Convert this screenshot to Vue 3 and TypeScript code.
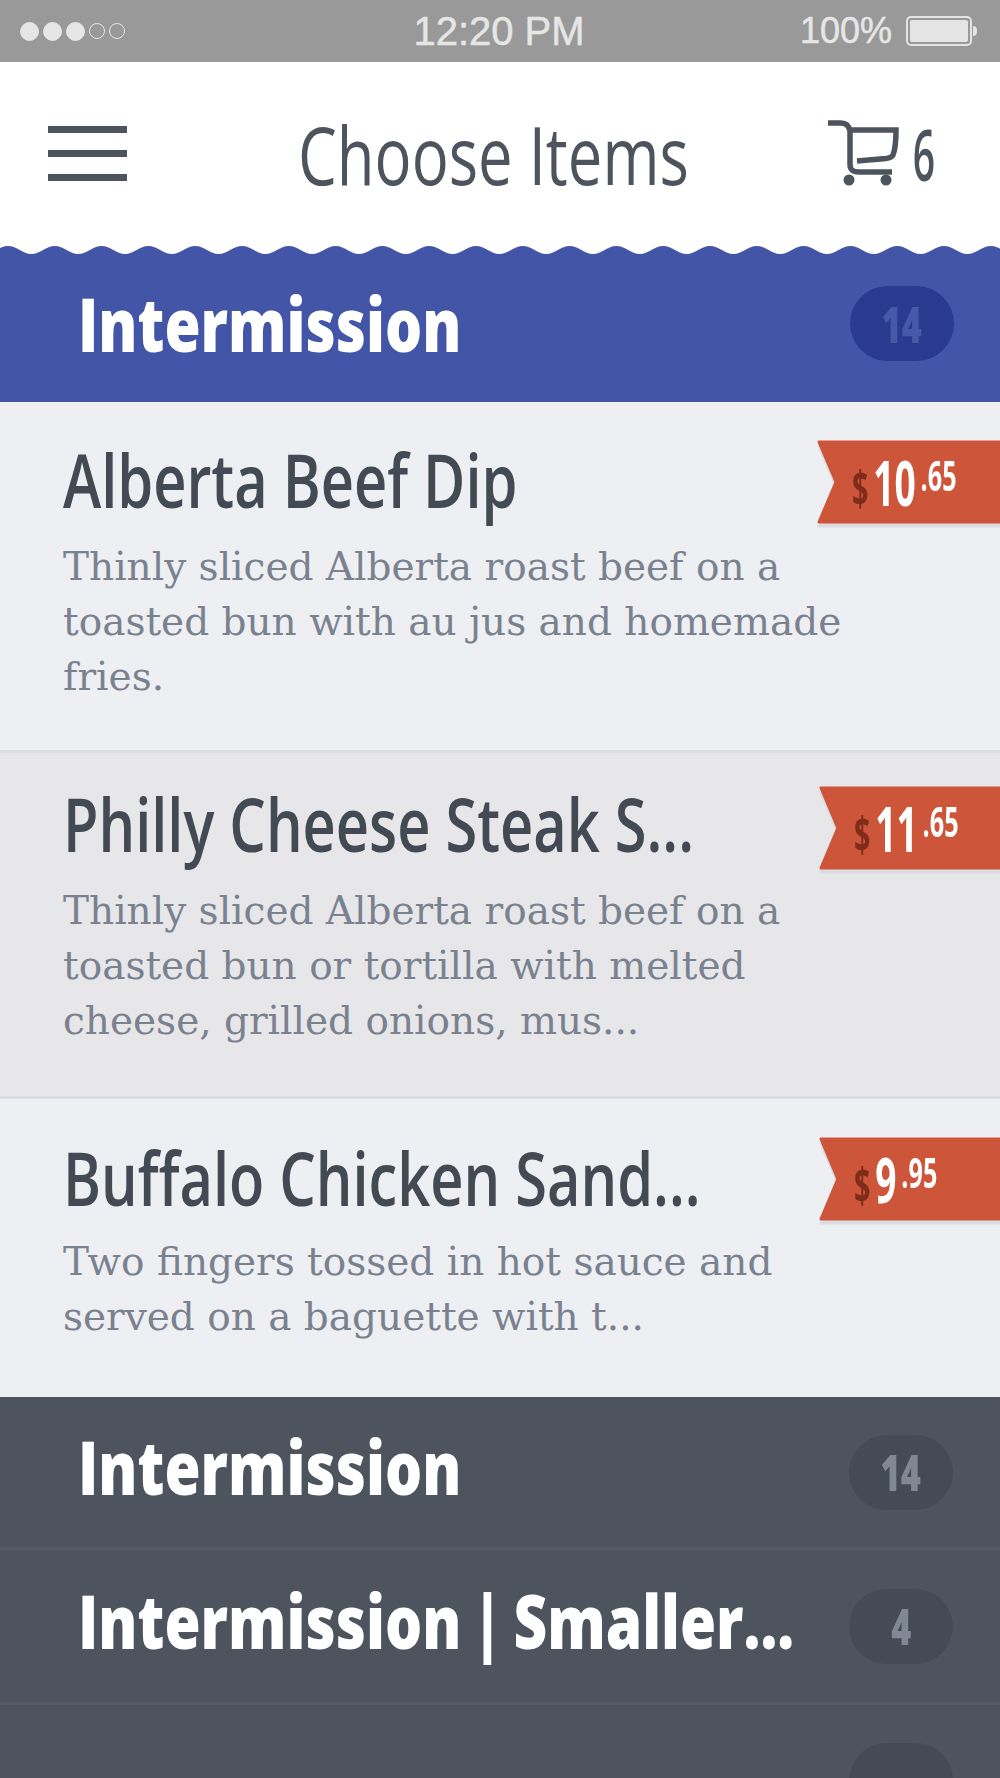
<script setup lang="ts">
interface MenuItem {
  name: string;
  lines: string[];
  dollars: string;
  cents: string;
  mod: string;
}

interface Row {
  name: string;
  count: string;
}

const items: MenuItem[] = [
  {
    name: 'Alberta Beef Dip',
    lines: ['Thinly sliced Alberta roast beef on a', 'toasted bun with au jus and homemade', 'fries.'],
    dollars: '10',
    cents: '.65',
    mod: 'item--first',
  },
  {
    name: 'Philly Cheese Steak S...',
    lines: ['Thinly sliced Alberta roast beef on a', 'toasted bun or tortilla with melted', 'cheese, grilled onions, mus...'],
    dollars: '11',
    cents: '.65',
    mod: 'item--shaded',
  },
  {
    name: 'Buffalo Chicken Sand...',
    lines: ['Two fingers tossed in hot sauce and', 'served on a baguette with t...'],
    dollars: '9',
    cents: '.95',
    mod: 'item--last',
  },
];

const rows: Row[] = [
  { name: 'Intermission', count: '14' },
  { name: 'Intermission | Smaller...', count: '4' },
  { name: '', count: '' },
];
</script>

<template>
  <div class="screen">
    <div class="status">
      <div class="status__dots">
        <i v-for="n in 3" :key="n" class="dot dot--full"></i>
        <i v-for="n in 2" :key="n" class="dot"></i>
      </div>
      <div class="status__time">12:20 PM</div>
      <div class="status__right">
        <span>100%</span>
        <svg width="72" height="32" viewBox="0 0 72 32">
          <rect x="1" y="2" width="64" height="28" rx="4" fill="none" stroke="#e4e4e4" stroke-width="2" />
          <rect x="4" y="5" width="58" height="22" rx="2" fill="#e4e4e4" />
          <path d="M67 11c3 0 4 2 4 5s-1 5-4 5z" fill="#e4e4e4" />
        </svg>
      </div>
    </div>

    <header class="top">
      <div class="burger"><i></i><i></i><i></i></div>
      <div class="top__title"><span>Choose Items</span></div>
      <div class="cart">
        <svg width="72" height="68" viewBox="0 0 72 68">
          <path d="M0 3h13c5 0 8 3 9 8v33c0 6 3 8 9 8h33M22 10H68c0 12-1 20-3 25-1 2-3 3-7 3.5L29 41" fill="none" stroke="#4d545e" stroke-width="5.5" />
          <circle cx="21" cy="60" r="5.5" fill="#4d545e" />
          <circle cx="58" cy="60" r="5.5" fill="#4d545e" />
        </svg>
        <span class="cart__count">6</span>
      </div>
    </header>

    <section class="section">
      <svg class="section__wave" width="1000" height="10" viewBox="0 0 1000 10">
        <defs>
          <pattern id="wave" width="46.8" height="10" patternUnits="userSpaceOnUse" x="8">
            <path d="M0 0H46.8V1C38 1 32 9 23.4 9S9 1 0 1z" fill="#fff" />
          </pattern>
        </defs>
        <rect width="1000" height="10" fill="url(#wave)" />
      </svg>
      <div class="section__head">
        <span class="head-name">Intermission</span>
        <span class="count count--blue"><span>14</span></span>
      </div>
    </section>

    <article v-for="item in items" :key="item.name" :class="['item', item.mod]">
      <div class="tag">
        <svg class="tag__bg" width="183" height="84" viewBox="0 0 183 84" preserveAspectRatio="none">
          <path d="M2 2H185V82H2L19 42z" fill="#cc553a" stroke="#cc553a" stroke-width="3" stroke-linejoin="round" />
        </svg>
        <span class="tag__text">
          <span class="tag__sign">$</span><span class="tag__big">{{ item.dollars }}</span><sup class="tag__small">{{ item.cents }}</sup>
        </span>
      </div>
      <h2 class="item__name"><span>{{ item.name }}</span></h2>
      <p class="item__desc">
        <span v-for="line in item.lines" :key="line">{{ line }}</span>
      </p>
    </article>

    <div v-for="row in rows" :key="row.count" class="row">
      <span class="head-name">{{ row.name }}</span>
      <span class="count"><span>{{ row.count }}</span></span>
    </div>
  </div>
</template>

<style>
html,
body {
  margin: 0;
  background: #4d545e;
}
</style>

<style scoped>
.screen {
  width: 1000px;
  height: 1778px;
  overflow: hidden;
  font-family: 'Open Sans', sans-serif;
}

.status {
  display: grid;
  grid-template-columns: 1fr auto 1fr;
  align-items: center;
  height: 62px;
  padding: 0 22px 0 20px;
  box-sizing: border-box;
  background: #999;
  color: #e6e6e6;
  font-family: 'Liberation Sans', sans-serif;
  font-size: 36px;
  -webkit-text-stroke: 0.5px #e6e6e6;
}

.status__dots {
  display: flex;
  align-items: center;
  gap: 4px;
}

.dot {
  width: 16px;
  height: 16px;
  border: 1.5px solid #e6e6e6;
  border-radius: 50%;
  box-sizing: border-box;
}

.dot--full {
  width: 19px;
  height: 19px;
  background: #e6e6e6;
}

.status__time {
  font-size: 40px;
}

.status__right {
  display: flex;
  align-items: center;
  justify-content: flex-end;
  gap: 14px;
}

.top {
  display: flex;
  align-items: center;
  height: 183px;
  padding: 0 65px 0 48px;
  box-sizing: border-box;
  background: #fff;
  color: #4d545e;
}

.burger {
  display: flex;
  flex-direction: column;
  gap: 17px;
  width: 79px;
}

.burger i {
  height: 7px;
  background: #4d545e;
}

.top__title {
  width: 390px;
  margin: 0 auto 0 171px;
  font-size: 80px;
  line-height: 100px;
  white-space: nowrap;
}

.top__title span {
  display: inline-block;
  transform: scaleX(0.77);
  transform-origin: left center;
}

.cart {
  display: flex;
  align-items: center;
  gap: 13px;
}

.cart svg {
  display: block;
}

.cart__count {
  display: flex;
  justify-content: center;
  width: 22px;
  font-size: 71px;
  line-height: 70px;
  font-weight: 600;
  transform: scaleX(0.55);
}

.section {
  position: relative;
  background: #4355a6;
}

.section__wave {
  position: absolute;
  top: 0;
  left: 0;
  display: block;
}

.section__head {
  display: flex;
  align-items: center;
  height: 157px;
  padding: 0 46px 0 78px;
  box-sizing: border-box;
}

.head-name {
  flex: 1;
  width: 0;
  color: #fff;
  font-size: 74px;
  font-weight: 800;
  line-height: 90px;
  word-spacing: -5px;
  white-space: nowrap;
  transform: scaleX(0.79);
  transform-origin: left center;
}

.count {
  display: flex;
  align-items: center;
  justify-content: center;
  flex: none;
  width: 104px;
  height: 75px;
  border-radius: 38px;
  background: #444b55;
  color: #7f8894;
  font-size: 49px;
  font-weight: 800;
}

.count span {
  transform: scaleX(0.7);
}

.count--blue {
  background: #2a3a8f;
  color: #4659a6;
}

.item {
  position: relative;
  height: 351px;
  padding: 34px 0 0 63px;
  box-sizing: border-box;
  background: #eeeff2;
  border-bottom: 3px solid #dcdce3;
}

.item--shaded {
  height: 346px;
  padding-top: 27px;
  background: #e7e7ea;
}

.item--last {
  height: 298px;
  padding-top: 35px;
  border-bottom: 0;
}

.item__name {
  margin: 0;
  color: #434a54;
  font-size: 74px;
  font-weight: 600;
  line-height: 88px;
  white-space: nowrap;
}

.item__name span {
  display: inline-block;
  transform: scaleX(0.78);
  transform-origin: left center;
}

.item__desc {
  margin: 15px 0 0;
  color: #7a8290;
  font-family: 'DejaVu Serif', serif;
  font-size: 39px;
  line-height: 55px;
  white-space: nowrap;
}

.item--last .item__desc {
  margin-top: 12px;
}

.item__desc span {
  display: block;
}

.tag {
  position: absolute;
  top: 38px;
  right: 0;
  width: 183px;
  height: 84px;
  display: flex;
  align-items: center;
  padding-left: 35px;
  box-sizing: border-box;
  filter: drop-shadow(0 4px 0 #dcdde2);
}

.item--shaded .tag {
  top: 33px;
  width: 181px;
}

.item--last .tag {
  width: 181px;
}

.tag__bg {
  position: absolute;
  top: 0;
  left: 0;
  width: 100%;
  height: 100%;
}

.tag__text {
  position: relative;
  display: inline-block;
  color: #fff;
  white-space: nowrap;
  font-weight: 700;
  transform: scaleX(0.6);
  transform-origin: left center;
}

.tag__sign {
  color: #7f2c1a;
  font-size: 48px;
  margin-right: 8px;
}

.tag__big {
  font-size: 62px;
}

.tag__small {
  margin-left: 8px;
  font-size: 42px;
  vertical-align: 15px;
  line-height: 0;
}

.row {
  display: flex;
  align-items: center;
  height: 153px;
  padding: 0 47px 0 78px;
  box-sizing: border-box;
  background: #4d545e;
  border-bottom: 3px solid #545b66;
}

.row:nth-last-child(2) {
  height: 155px;
}

.row:last-child {
  height: 151px;
  border-bottom: 0;
}

.row .head-name {
  margin-bottom: 10px;
}
</style>
